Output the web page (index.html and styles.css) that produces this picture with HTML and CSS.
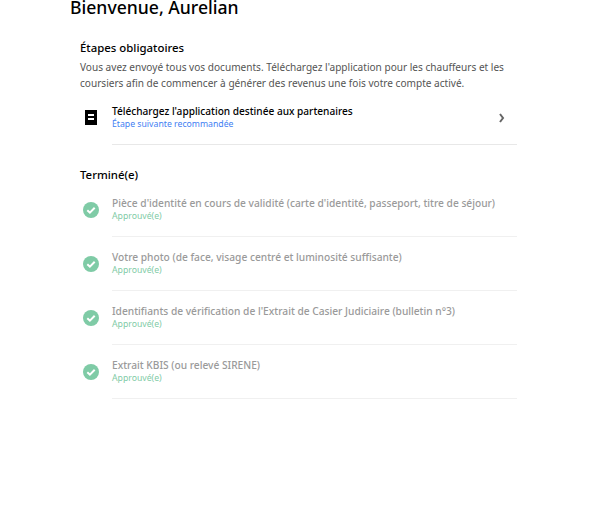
FILE: index.html
```html
<!DOCTYPE html>
<html lang="fr">
<head>
    <meta charset="UTF-8">
    <meta name="viewport" content="width=device-width, initial-scale=1.0">
    <title>Bienvenue</title>
    <link rel="stylesheet" href="styles.css">
</head>
<body>
    <div class="page">
        <h1>Bienvenue, Aurelian</h1>
        <div class="content">
            <h2>Étapes obligatoires</h2>
            <p class="intro">Vous avez envoyé tous vos documents. Téléchargez l'application pour les chauffeurs et les coursiers afin de commencer à générer des revenus une fois votre compte activé.</p>
            <div class="step step-next">
                <div class="step-icon">
                    <svg width="16" height="16" viewBox="0 0 16 16"><path fill="#000" d="M2 0h12v15H2z"/><path fill="#fff" d="M5 4h6v2H5zM5 8h6v2H5z"/></svg>
                </div>
                <div class="step-body">
                    <div class="step-title">Téléchargez l'application destinée aux partenaires</div>
                    <div class="step-sub next">Étape suivante recommandée</div>
                    <svg class="chevron" width="6" height="10" viewBox="0 0 6 10"><path fill="none" stroke="#666" stroke-width="2" d="M1 1l3 4-3 4"/></svg>
                </div>
            </div>
            <h2 class="done-title">Terminé(e)</h2>
            <div class="step done">
                <div class="step-icon">
                    <svg width="16" height="16" viewBox="0 0 16 16"><circle cx="8" cy="8" r="8" fill="#7fcba6"/><path fill="none" stroke="#fff" stroke-width="2" d="M4.300 8.200l2.600 2.500 4.800-5"/></svg>
                </div>
                <div class="step-body">
                    <div class="step-title">Pièce d'identité en cours de validité (carte d'identité, passeport, titre de séjour)</div>
                    <div class="step-sub">Approuvé(e)</div>
                </div>
            </div>
            <div class="step done">
                <div class="step-icon">
                    <svg width="16" height="16" viewBox="0 0 16 16"><circle cx="8" cy="8" r="8" fill="#7fcba6"/><path fill="none" stroke="#fff" stroke-width="2" d="M4.300 8.200l2.600 2.500 4.800-5"/></svg>
                </div>
                <div class="step-body">
                    <div class="step-title">Votre photo (de face, visage centré et luminosité suffisante)</div>
                    <div class="step-sub">Approuvé(e)</div>
                </div>
            </div>
            <div class="step done">
                <div class="step-icon">
                    <svg width="16" height="16" viewBox="0 0 16 16"><circle cx="8" cy="8" r="8" fill="#7fcba6"/><path fill="none" stroke="#fff" stroke-width="2" d="M4.300 8.200l2.600 2.500 4.800-5"/></svg>
                </div>
                <div class="step-body">
                    <div class="step-title">Identifiants de vérification de l'Extrait de Casier Judiciaire (bulletin n°3)</div>
                    <div class="step-sub">Approuvé(e)</div>
                </div>
            </div>
            <div class="step done">
                <div class="step-icon">
                    <svg width="16" height="16" viewBox="0 0 16 16"><circle cx="8" cy="8" r="8" fill="#7fcba6"/><path fill="none" stroke="#fff" stroke-width="2" d="M4.300 8.200l2.600 2.500 4.800-5"/></svg>
                </div>
                <div class="step-body">
                    <div class="step-title">Extrait KBIS (ou relevé SIRENE)</div>
                    <div class="step-sub">Approuvé(e)</div>
                </div>
            </div>
        </div>
    </div>
</body>
</html>
```
FILE: styles.css
```css
html, body {
    height: 100%;
}
body {
    margin: 0;
    background: #fff;
    color: #000;
    font-family: 'Noto Sans', sans-serif;
    overflow: hidden;
}
.page {
    padding-left: 70px;
    width: 447px;
}
h1 {
    margin: 0;
    font-size: 17.600px;
    font-weight: 500;
    line-height: 14px;
    height: 14px;
}
.content {
    padding: 25px 0 0 10px;
}
h2 {
    margin: 0;
    font-size: 11.400px;
    font-weight: 500;
    line-height: 18px;
}
.intro {
    margin: 2px 0 0;
    font-size: 10.080px;
    line-height: 16px;
    color: #545454;
}
.step {
    display: flex;
}
.step-icon {
    width: 32px;
    display: flex;
    align-items: center;
    padding-left: 3px;
    box-sizing: border-box;
}
.step-body {
    flex: 1;
    position: relative;
    border-bottom: 1px solid #f0f0f0;
    padding: 13px 0 13px;
}
.step-next .step-body {
    border-bottom-color: #e8e8e8;
}
.step-title {
    font-size: 10.200px;
    line-height: 14px;
    font-weight: 500;
}
.step-next .step-title {
    font-size: 10.100px;
}
.step-sub {
    font-size: 8.700px;
    line-height: 13px;
}
.next {
    color: #3f80f3;
}
.chevron {
    position: absolute;
    right: 12px;
    top: 22px;
}
.done-title {
    margin-top: 22px;
    line-height: 16px;
}
.done .step-title {
    color: #9a9a9a;
}
.done .step-sub {
    color: #7fcba6;
}
```
